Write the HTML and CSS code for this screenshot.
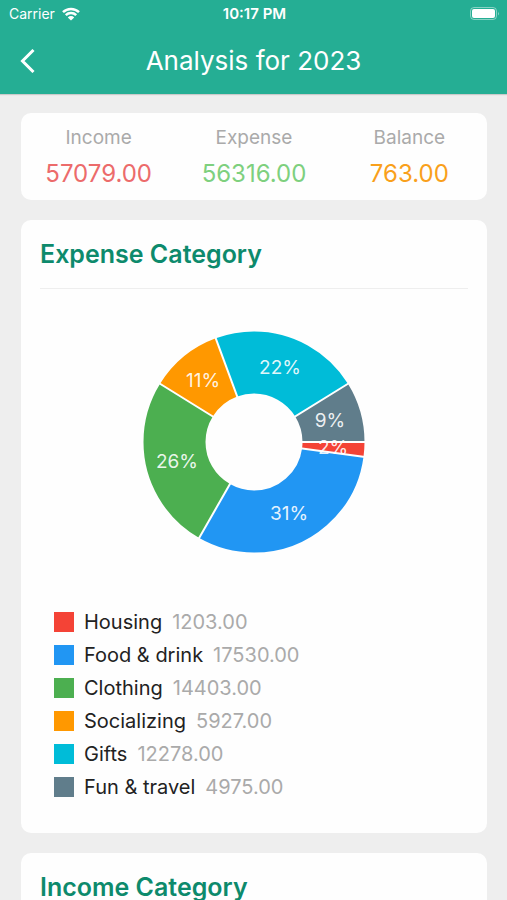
FILE: index.html
```html
<!DOCTYPE html>
<html lang="en">
<head>
    <meta charset="UTF-8">
    <meta name="viewport" content="width=device-width, initial-scale=1.0">
    <title>Analysis for 2023</title>
    <link rel="stylesheet" href="styles.css">
</head>
<body>
    <header class="header">
        <div class="status">
            <div class="carrier">
                <span>Carrier</span>
                <svg class="wifi" viewBox="0 0 18 14" width="18" height="14">
                    <path d="M1 5.2a11.4 11.4 0 0 1 16 0M3.8 8.2a7.4 7.4 0 0 1 10.4 0" fill="none" stroke="#fff" stroke-width="2.5"/>
                    <path d="M9 13.6L5.8 10.4a4.5 4.5 0 0 1 6.4 0z" fill="#fff"/>
                </svg>
            </div>
            <time class="time">10:17 PM</time>
            <svg class="battery" viewBox="0 0 30 14" width="30" height="14">
                <rect x="0.5" y="0.5" width="26" height="12" rx="3.5" fill="none" stroke="#fff" stroke-opacity="0.45"/>
                <rect x="2" y="2" width="23" height="9" rx="2" fill="#fff"/>
                <path d="M28 4.5q1.6 2 0 4z" fill="#fff" fill-opacity="0.5"/>
            </svg>
        </div>
        <div class="nav">
            <button class="back" type="button" aria-label="Back">
                <svg viewBox="0 0 16 24" width="16" height="24">
                    <path d="M13.5 1L2.5 12l11 11" fill="none" stroke="#fff" stroke-width="3"/>
                </svg>
            </button>
            <h1 class="title">Analysis for 2023</h1>
        </div>
    </header>
    <main class="main">
        <section class="card summary">
            <div class="total"><span class="label">Income</span><span class="num income">57079.00</span></div>
            <div class="total"><span class="label">Expense</span><span class="num expense">56316.00</span></div>
            <div class="total"><span class="label">Balance</span><span class="num balance">763.00</span></div>
        </section>
        <section class="card category">
            <h2 class="heading">Expense Category</h2>
            <!-- pathLength is the total expense, so each dash is the amount itself -->
            <svg class="pie" viewBox="-112 -112 224 224" width="224" height="224" role="img" aria-label="Expense Category">
                <circle class="slice housing" r="79.5" pathLength="56316" stroke-dasharray="1203 55113"/>
                <circle class="slice food" r="79.5" pathLength="56316" stroke-dasharray="17530 38786" stroke-dashoffset="-1203"/>
                <circle class="slice clothing" r="79.5" pathLength="56316" stroke-dasharray="14403 41913" stroke-dashoffset="-18733"/>
                <circle class="slice social" r="79.5" pathLength="56316" stroke-dasharray="5927 50389" stroke-dashoffset="-33136"/>
                <circle class="slice gifts" r="79.5" pathLength="56316" stroke-dasharray="12278 44038" stroke-dashoffset="-39063"/>
                <circle class="slice travel" r="79.5" pathLength="56316" stroke-dasharray="4975 51341" stroke-dashoffset="-51341"/>
                <path class="gap" d="M0 0H112M0 0L111 15M0 0L-55.6 97.2M0 0L-95.2 -59M0 0L-38.8 -105.1M0 0L95.2 -59"/>
                <text x="79" y="12">2%</text>
                <text x="35" y="78">31%</text>
                <text x="-77" y="26">26%</text>
                <text x="-51" y="-55">11%</text>
                <text x="26" y="-68">22%</text>
                <text x="76" y="-15">9%</text>
            </svg>
            <ul class="legend">
                <li><i class="swatch housing"></i><span>Housing</span><span class="amount">1203.00</span></li>
                <li><i class="swatch food"></i><span>Food &amp; drink</span><span class="amount">17530.00</span></li>
                <li><i class="swatch clothing"></i><span>Clothing</span><span class="amount">14403.00</span></li>
                <li><i class="swatch social"></i><span>Socializing</span><span class="amount">5927.00</span></li>
                <li><i class="swatch gifts"></i><span>Gifts</span><span class="amount">12278.00</span></li>
                <li><i class="swatch travel"></i><span>Fun &amp; travel</span><span class="amount">4975.00</span></li>
            </ul>
        </section>
        <section class="card category">
            <h2 class="heading">Income Category</h2>
        </section>
    </main>
</body>
</html>
```
FILE: styles.css
```css
*{
    box-sizing: border-box;
}
body{
    margin: 0;
    background-color: #eee;
    color: #222;
    font-family: Inter, Roboto, sans-serif;
    font-size: 20px;
}
.header{
    background-color: #25ae94;
    color: #fff;
    box-shadow: 0 1px 1px rgba(0, 0, 0, 0.15);
}
.status{
    display: grid;
    grid-template-columns: 1fr auto 1fr;
    align-items: center;
    height: 27px;
    padding: 0 7px 0 9px;
    font-size: 14px;
}
.carrier{
    display: flex;
    align-items: center;
    gap: 7px;
}
.time{
    font-size: 15px;
    font-weight: 600;
}
.battery{
    justify-self: end;
}
.nav{
    display: grid;
    grid-template-columns: 56px 1fr 56px;
    align-items: center;
    height: 67px;
}
.back{
    display: flex;
    padding: 0 20px;
    border: 0;
    background: none;
    cursor: pointer;
}
.title{
    margin: 0;
    text-align: center;
    font-size: 26px;
    font-weight: 400;
}
.main{
    padding: 19px 20px 0 21px;
}
.card{
    margin-bottom: 20px;
    border-radius: 10px;
    background-color: #fefefe;
}
.summary{
    display: grid;
    grid-template-columns: repeat(3, 1fr);
    padding: 8px 0 7px;
    text-align: center;
}
.total{
    display: flex;
    flex-direction: column;
}
.label{
    line-height: 33px;
    color: #aaa;
}
.num{
    line-height: 39px;
    font-size: 24px;
}
.income{
    color: #ec6b6b;
}
.expense{
    color: #7ed07e;
}
.balance{
    color: #f9a01b;
}
.category{
    padding: 0 19px 30px;
}
.heading{
    margin: 0;
    height: 69px;
    line-height: 69px;
    border-bottom: 1px solid #eee;
    color: #0d8a6c;
    font-size: 25px;
    font-weight: 600;
}
.label,
.pie text{
    font-size: 19px;
}
.pie{
    display: block;
    margin: 41px auto 51px;
}
.slice{
    fill: none;
    stroke: currentColor;
    stroke-width: 62px;
}
.pie text{
    fill: #fff;
    fill-opacity: 0.9;
    text-anchor: middle;
}
.gap{
    stroke: #fefefe;
    stroke-width: 2px;
}
.legend{
    margin: 0;
    padding: 0 0 0 14px;
    list-style: none;
}
.legend li{
    display: flex;
    align-items: center;
    height: 33px;
}
.swatch{
    width: 20px;
    height: 20px;
    margin-right: 10px;
    background-color: currentColor;
}
.amount{
    margin-left: 10px;
    color: #aaa;
}
.housing{
    color: #f44336;
}
.food{
    color: #2196f3;
}
.clothing{
    color: #4caf50;
}
.social{
    color: #ff9800;
}
.gifts{
    color: #00bcd8;
}
.travel{
    color: #607d8b;
}
```
